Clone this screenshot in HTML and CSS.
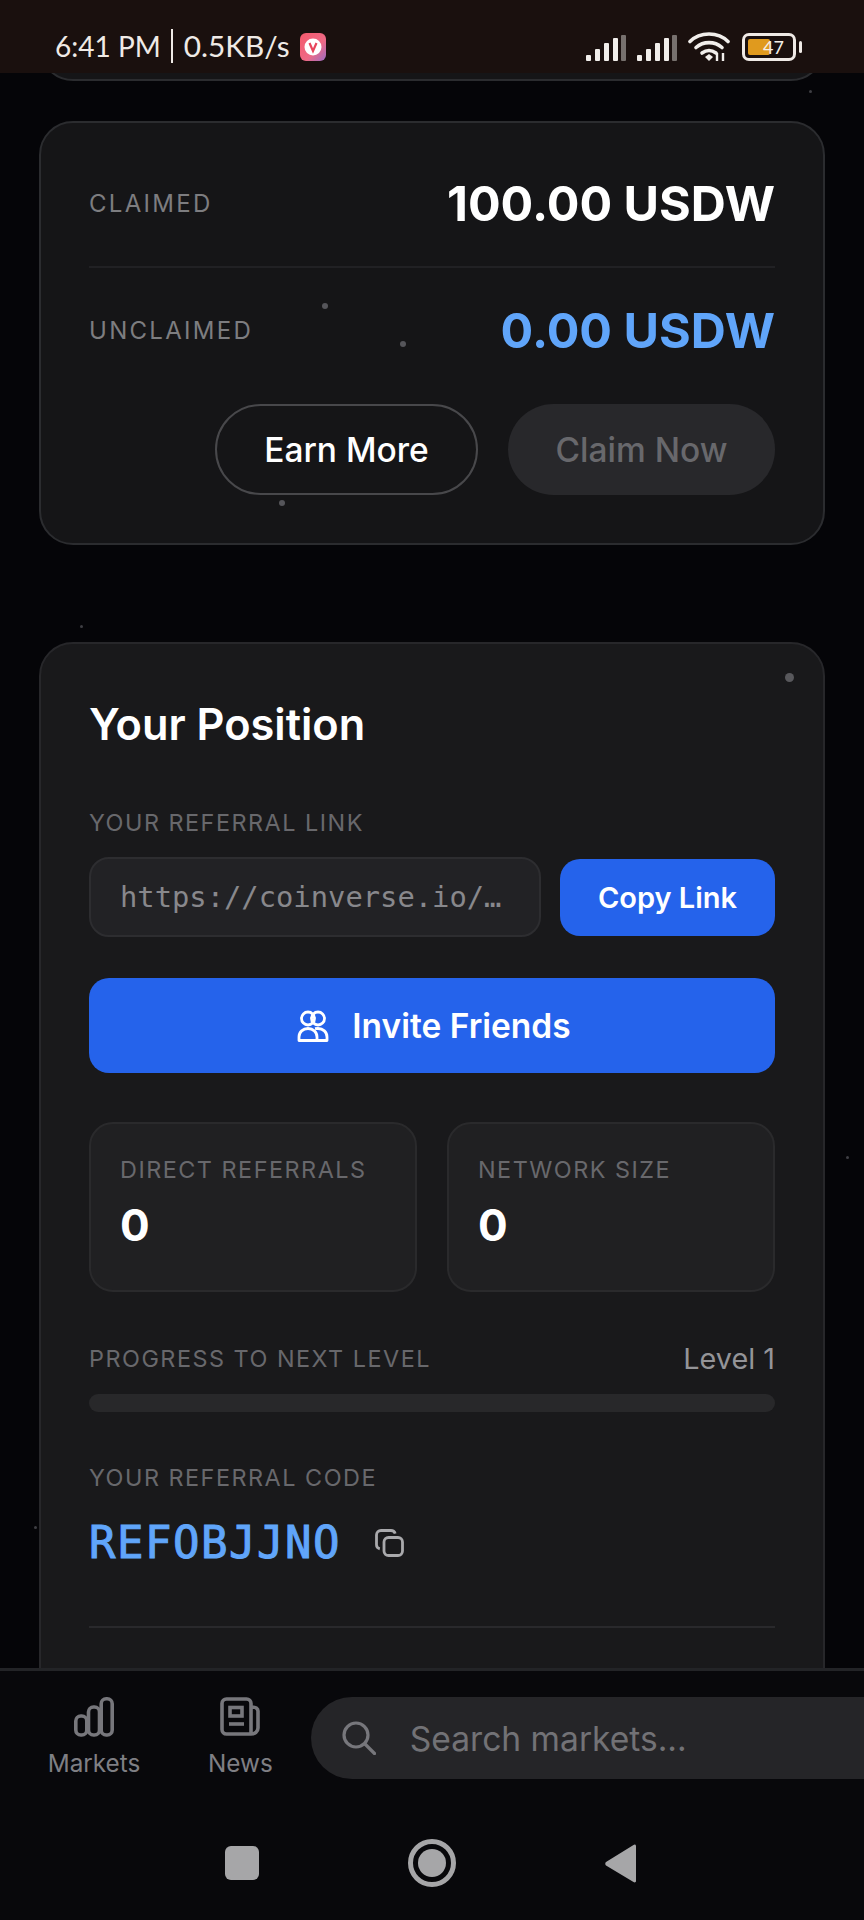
FILE: index.html
```html
<!DOCTYPE html>
<html lang="en">
<head>
    <meta charset="UTF-8">
    <meta name="viewport" content="width=device-width, initial-scale=1.0">
    <title>Your Position</title>
    <link rel="stylesheet" href="styles.css">
</head>
<body>
    <div class="phone">
        <header class="status-bar">
            <div class="status-left">
                <span>6:41 PM</span>
                <span class="status-sep"></span>
                <span class="status-speed">0.5KB/s</span>
                <svg class="app-badge" viewBox="0 0 26 28">
                    <defs>
                        <linearGradient id="badge" x1="0" y1="0" x2="1" y2="1">
                            <stop offset="0" stop-color="#f4596b"/>
                            <stop offset="0.6" stop-color="#ee6a86"/>
                            <stop offset="1" stop-color="#9a6cc4"/>
                        </linearGradient>
                    </defs>
                    <rect width="26" height="28" rx="6" fill="url(#badge)"/>
                    <circle cx="13" cy="14" r="8.5" fill="#fff"/>
                    <path d="M9.5 10l3.5 8 3.5-8" fill="none" stroke="#e8455c" stroke-width="2.2"/>
                </svg>
            </div>
            <div class="status-right">
                <svg class="signal" viewBox="0 0 40 26">
                    <rect x="0" y="20" width="5" height="6" rx="1" fill="#f1eeeb"/>
                    <rect x="9" y="14" width="5" height="12" rx="1" fill="#f1eeeb"/>
                    <rect x="18" y="8" width="5" height="18" rx="1" fill="#f1eeeb"/>
                    <rect x="27" y="3" width="5" height="23" rx="1" fill="#f1eeeb"/>
                    <rect x="35" y="0" width="5" height="26" rx="1" fill="#77716e"/>
                </svg>
                <svg class="signal" viewBox="0 0 40 26">
                    <rect x="0" y="20" width="5" height="6" rx="1" fill="#f1eeeb"/>
                    <rect x="9" y="14" width="5" height="12" rx="1" fill="#f1eeeb"/>
                    <rect x="18" y="8" width="5" height="18" rx="1" fill="#f1eeeb"/>
                    <rect x="27" y="3" width="5" height="23" rx="1" fill="#f1eeeb"/>
                    <rect x="35" y="0" width="5" height="26" rx="1" fill="#77716e"/>
                </svg>
                <svg class="wifi" viewBox="0 0 42 30">
                    <g fill="none" stroke="#f1eeeb" stroke-width="3.6" stroke-linecap="round">
                        <path d="M2 9.5C12-.5 30-.5 40 9.5"/>
                        <path d="M8 15.5c7.500-6.500 18.500-6.500 26 0"/>
                        <path d="M14 21c4.500-3.200 9.500-3.200 14 0"/>
                    </g>
                    <path d="M17 25l4-3 4 3-4 4z" fill="#f1eeeb"/>
                    <path d="M29 21v8M35 21v8" stroke="#f1eeeb" stroke-width="2.400"/>
                </svg>
                <div class="battery">
                    <div class="battery-body">
                        <div class="battery-fill"></div>
                        <span class="battery-num">47</span>
                    </div>
                    <div class="battery-nub"></div>
                </div>
            </div>
        </header>

        <main class="content">
            <span class="dot" style="left: 80px; top: 552px"></span>
            <span class="dot" style="left: 809px; top: 17px"></span>
            <span class="dot" style="left: 846px; top: 1083px"></span>
            <span class="dot" style="left: 34px; top: 1453px"></span>

            <div class="card card-prev"></div>

            <section class="card card-claim">
                <span class="dot dot-big" style="left: 281px; top: 180px"></span>
                <span class="dot dot-big" style="left: 359px; top: 218px"></span>
                <span class="dot dot-big" style="left: 238px; top: 377px"></span>
                <div class="claim-row claim-row-line">
                    <span class="claim-label">CLAIMED</span>
                    <span class="claim-value">100.00 USDW</span>
                </div>
                <div class="claim-row">
                    <span class="claim-label">UNCLAIMED</span>
                    <span class="claim-value claim-value-blue">0.00 USDW</span>
                </div>
                <div class="claim-actions">
                    <button class="pill pill-outline">Earn More</button>
                    <button class="pill pill-disabled">Claim Now</button>
                </div>
            </section>

            <section class="card card-position">
                <span class="dot dot-large" style="left: 744px; top: 29px"></span>
                <h2 class="title">Your Position</h2>

                <div class="label">YOUR REFERRAL LINK</div>
                <div class="link-row">
                    <div class="link-box">https://coinverse.io/…</div>
                    <button class="btn btn-copy">Copy Link</button>
                </div>

                <button class="btn btn-invite">
                    <svg class="invite-icon" viewBox="0 0 32 32" fill="none" stroke="#fff" stroke-width="2.800">
                        <circle cx="11" cy="8.500" r="6.500"/>
                        <circle cx="21" cy="8.500" r="6.500"/>
                        <path d="M2 30.500v-3.500c0-5 4-8.500 9-8.500s9 3.500 9 8.500v3.500z" stroke-linejoin="round"/>
                        <path d="M18 18.700c1-.200 2-.200 3-.200 5 0 9 3.500 9 8.500v3.500H20" stroke-linejoin="round"/>
                    </svg>
                    Invite Friends
                </button>

                <div class="stats">
                    <div class="stat">
                        <div class="label">DIRECT REFERRALS</div>
                        <div class="stat-value">0</div>
                    </div>
                    <div class="stat">
                        <div class="label">NETWORK SIZE</div>
                        <div class="stat-value">0</div>
                    </div>
                </div>

                <div class="progress-head">
                    <span class="label">PROGRESS TO NEXT LEVEL</span>
                    <span class="level">Level 1</span>
                </div>
                <div class="progress-track"></div>

                <div class="label label-code">YOUR REFERRAL CODE</div>
                <div class="code-row">
                    <span class="code">REFOBJJNO</span>
                    <svg class="code-copy" viewBox="0 0 29 28" fill="none" stroke="#a9a9ac" stroke-width="2.800">
                        <rect x="9" y="8.500" width="18.500" height="18" rx="4.500"/>
                        <path d="M4.800 19.800c-2-.500-3.300-2-3.300-4V6c0-2.500 2-4.500 4.500-4.500h10c2 0 3.600 1.300 4.200 3.200"/>
                    </svg>
                </div>
                <div class="card-divider"></div>
            </section>
        </main>

        <nav class="tabbar">
            <div class="tab">
                <svg class="tab-icon" viewBox="0 0 40 40" fill="none" stroke="#77777c" stroke-width="3.600">
                    <rect x="1.800" y="19" width="11" height="19" rx="5"/>
                    <rect x="14.500" y="10" width="11" height="28" rx="5"/>
                    <rect x="27.200" y="1.800" width="11" height="36.200" rx="5"/>
                </svg>
                <span>Markets</span>
            </div>
            <div class="tab tab-news">
                <svg class="tab-icon" viewBox="0 0 40 40" fill="none" stroke="#77777c" stroke-width="3.600">
                    <path d="M31 37H6.500c-2.500 0-4.500-2-4.500-4.500V6.500C2 4 4 2 6.500 2h20C29 2 31 4 31 6.500V37c3.800 0 7-2.500 7-6V14c0-2.500-2-4-7-4"/>
                    <rect x="10" y="10.500" width="12" height="8.500"/>
                    <path d="M9 27h15"/>
                </svg>
                <span>News</span>
            </div>
            <div class="search">
                <svg class="search-icon" viewBox="0 0 34 34" fill="none" stroke="#77777c" stroke-width="3.200" stroke-linecap="round">
                    <circle cx="14" cy="14" r="12"/>
                    <path d="M23 23l9.500 9.500"/>
                </svg>
                <span class="search-text">Search markets...</span>
            </div>
        </nav>

        <footer class="navbar">
            <div class="nav-square"></div>
            <div class="nav-circle"></div>
            <svg class="nav-back" viewBox="0 0 32 39">
                <path d="M31 2c0-1.500-1.500-2-2.500-1L1 18c-1 1-1 2.500 0 3.500L28.500 38c1 .8 2.500 .5 2.500-1z" fill="#a6a6a8"/>
            </svg>
        </footer>
    </div>
</body>
</html>
```

FILE: styles.css
```css
* {
    box-sizing: border-box;
}
body {
    margin: 0;
    background-color: #050508;
    font-family: Inter, "Liberation Sans", sans-serif;
}
button {
    font-family: inherit;
    border: none;
}
.phone {
    width: 864px;
    height: 1920px;
    display: flex;
    flex-direction: column;
    overflow: hidden;
}

/* status bar */
.status-bar {
    height: 73px;
    flex: none;
    background-color: #1a100e;
    color: #efeae6;
    display: flex;
    justify-content: space-between;
    padding: 27px 62px 0 55px;
    position: relative;
    z-index: 2;
}
.status-left {
    display: flex;
    align-items: flex-start;
    font-family: Lato, sans-serif;
    font-size: 28px;
    line-height: 38px;
}
.status-speed {
    font-size: 29.800px;
}
.status-sep {
    width: 2px;
    height: 34px;
    background-color: #efeae6;
    margin: 2px 11px 0 10px;
}
.app-badge {
    width: 26px;
    height: 28px;
    margin: 6px 0 0 10px;
}
.status-right {
    display: flex;
    align-items: flex-start;
    padding-top: 5px;
}
.signal {
    width: 40px;
    height: 26px;
    margin: 3px 11px 0 0;
}
.wifi {
    width: 42px;
    height: 30px;
    margin-right: 12px;
}
.battery {
    display: flex;
    align-items: center;
    height: 29px;
}
.battery-body {
    width: 54px;
    height: 28px;
    border: 3px solid #efeae6;
    border-radius: 7px;
    padding: 3px;
    position: relative;
}
.battery-fill {
    width: 22px;
    height: 100%;
    background-color: #e09a1e;
    border-radius: 2px;
}
.battery-num {
    position: absolute;
    left: 18px;
    top: -1px;
    font-family: Lato, sans-serif;
    font-size: 18px;
    line-height: 24px;
    color: #f4efe8;
}
.battery-nub {
    width: 3px;
    height: 12px;
    background-color: #efeae6;
    border-radius: 2px;
    margin-left: 3px;
}

/* scrolling part */
.content {
    flex: 1;
    min-height: 0;
    padding: 0 39px;
    position: relative;
    overflow: hidden;
}
.card {
    position: relative;
    border: 2px solid #2b2c2f;
    border-radius: 34px;
    background-color: #151517;
}
.card-prev {
    height: 100px;
    margin-top: -92px;
}
.card-claim {
    height: 424px;
    margin-top: 40px;
    padding: 0 48px;
}
.dot {
    position: absolute;
    width: 3px;
    height: 3px;
    border-radius: 50%;
    background-color: #3f3f44;
}
.dot-big {
    width: 6px;
    height: 6px;
    background-color: #55555a;
}
.dot-large {
    width: 9px;
    height: 9px;
    background-color: #58585c;
}
.claim-row {
    display: flex;
    justify-content: space-between;
    align-items: center;
}
.claim-row-line {
    height: 145px;
    padding-top: 18px;
    border-bottom: 2px solid #212124;
}
.claim-row-line + .claim-row {
    height: 123px;
    padding-top: 2px;
}
.claim-label {
    font-size: 24px;
    letter-spacing: 2.300px;
    color: #7d7d80;
}
.claim-value {
    font-size: 48.500px;
    font-weight: 700;
    color: #fff;
}
.claim-value-blue {
    color: #60a5fa;
}
.claim-actions {
    display: flex;
    justify-content: flex-end;
    gap: 30px;
    margin-top: 13px;
}
.pill {
    height: 91px;
    border-radius: 46px;
    font-size: 33.500px;
    font-weight: 500;
}
.pill-outline {
    width: 263px;
    background-color: transparent;
    border: 2px solid #48484b;
    color: #fff;
}
.pill-disabled {
    width: 267px;
    background-color: #28282b;
    color: #68686c;
}

.card-position {
    height: 1100px;
    margin-top: 97px;
    padding: 0 48px;
    background-color: #19191b;
    border-color: #27272a;
}
.title {
    margin: 0;
    padding-top: 51px;
    font-size: 43.300px;
    line-height: 58px;
    font-weight: 600;
    color: #fff;
}
.label {
    font-size: 23.400px;
    line-height: 28px;
    letter-spacing: 1.500px;
    color: #68686c;
}
.card-position > .label:first-of-type {
    margin-top: 56px;
}
.link-row {
    display: flex;
    align-items: center;
    justify-content: space-between;
    margin-top: 20px;
}
.link-box {
    width: 452px;
    height: 80px;
    padding: 0 29px;
    display: flex;
    align-items: center;
    background-color: #222225;
    border: 2px solid #2d2d30;
    border-radius: 20px;
    font-family: "DejaVu Sans Mono", monospace;
    font-size: 28.800px;
    color: #88888c;
    white-space: nowrap;
}
.btn {
    background-color: #2563eb;
    color: #fff;
    border-radius: 20px;
    font-weight: 600;
}
.btn-copy {
    width: 215px;
    height: 77px;
    font-size: 29px;
}
.btn-invite {
    width: 100%;
    height: 95px;
    margin-top: 41px;
    padding: 0 0 0 4px;
    font-size: 33.500px;
    display: flex;
    align-items: center;
    justify-content: center;
    gap: 23px;
}
.invite-icon {
    width: 32px;
    height: 32px;
}
.stats {
    display: grid;
    grid-template-columns: 1fr 1fr;
    gap: 30px;
    margin-top: 49px;
}
.stat {
    height: 170px;
    padding: 32px 29px 0;
    background-color: #202022;
    border: 2px solid #2a2a2c;
    border-radius: 24px;
}
.stat .label {
    letter-spacing: 1.500px;
}
.stat-value {
    margin-top: 13px;
    font-size: 44px;
    line-height: 56px;
    font-weight: 700;
    color: #fff;
}
.progress-head {
    display: flex;
    justify-content: space-between;
    align-items: center;
    margin-top: 50px;
}
.level {
    font-size: 28.800px;
    line-height: 34px;
    color: #949498;
}
.progress-track {
    height: 18px;
    margin-top: 18px;
    border-radius: 9px;
    background-color: #28282a;
}
.label-code {
    margin-top: 52px;
}
.code-row {
    display: flex;
    align-items: center;
    gap: 34px;
    margin-top: 27px;
}
.code {
    font-family: "DejaVu Sans Mono", monospace;
    font-size: 44px;
    line-height: 48px;
    letter-spacing: 1.500px;
    color: #60a5fa;
    -webkit-text-stroke: 1px #60a5fa;
}
.code-copy {
    width: 29px;
    height: 28px;
}
.card-divider {
    height: 2px;
    margin-top: 59px;
    background-color: #29292c;
}

/* bottom navigation */
.tabbar {
    height: 159px;
    flex: none;
    display: flex;
    align-items: flex-start;
    background-color: #08080b;
    border-top: 3px solid #232427;
    padding: 26px 0 0 49px;
    position: relative;
    z-index: 2;
}
.tab {
    width: 90px;
    display: flex;
    flex-direction: column;
    align-items: center;
    color: #7f7f84;
    font-size: 24.300px;
    line-height: 30px;
}
.tab-news {
    margin-left: 69px;
    width: 65px;
}
.tab-icon {
    width: 40px;
    height: 40px;
    margin-bottom: 11px;
}
.search {
    flex: none;
    width: 640px;
    height: 82px;
    margin-left: 38px;
    padding-left: 31px;
    display: flex;
    align-items: center;
    background-color: #252528;
    border-radius: 41px 0 0 41px;
}
.search-icon {
    width: 34px;
    height: 34px;
}
.search-text {
    margin-left: 34px;
    font-size: 33.600px;
    color: #727276;
}
.navbar {
    height: 93px;
    flex: none;
    display: flex;
    align-items: flex-start;
    background-color: #08080b;
    padding: 13px 0 0 225px;
}
.nav-square {
    width: 34px;
    height: 34px;
    margin-top: 6px;
    border-radius: 6px;
    background-color: #a6a6a8;
}
.nav-circle {
    width: 48px;
    height: 48px;
    margin: -1px 0 0 149px;
    border-radius: 50%;
    border: 5px solid #a6a6a8;
    position: relative;
}
.nav-circle::after {
    content: "";
    position: absolute;
    inset: 5px;
    border-radius: 50%;
    background-color: #a6a6a8;
}
.nav-back {
    width: 32px;
    height: 39px;
    margin: 4px 0 0 149px;
}
```
